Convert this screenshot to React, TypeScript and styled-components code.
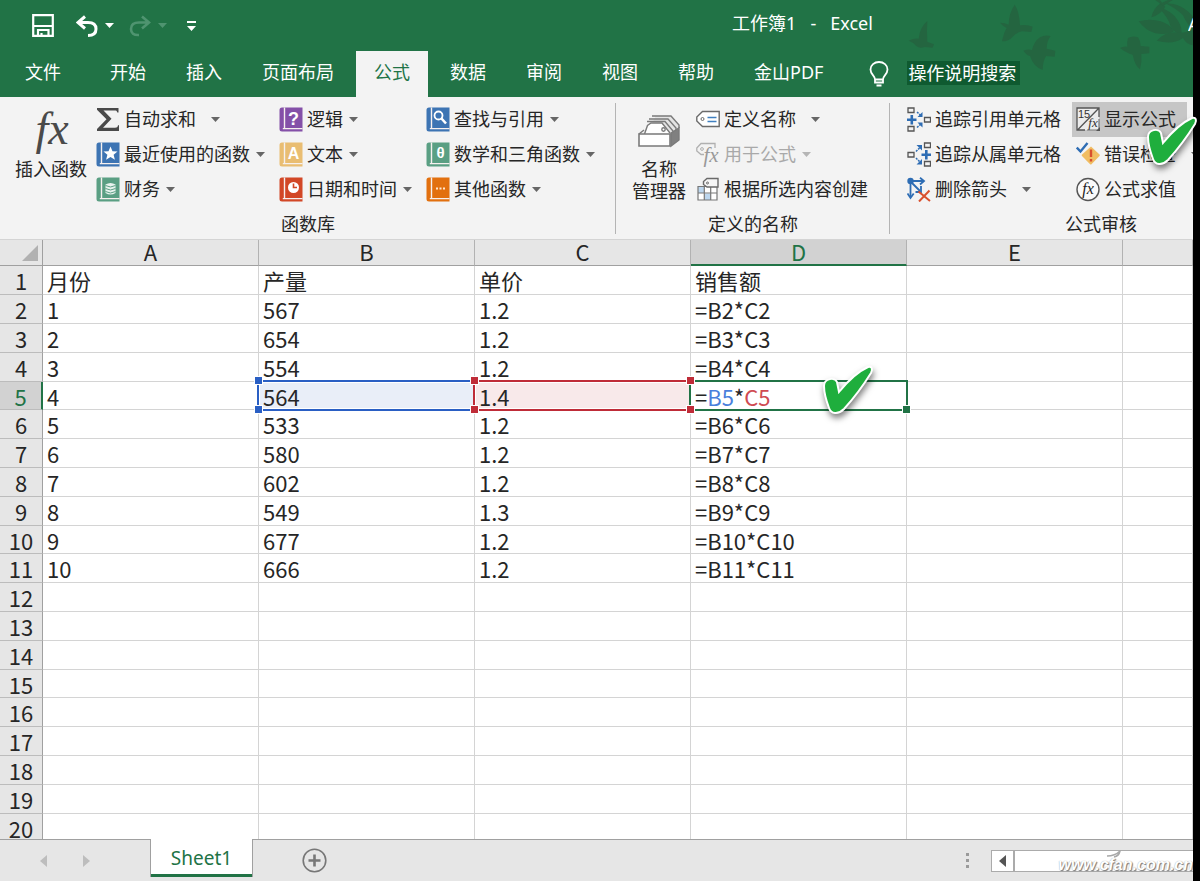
import React from "react";
import styled, { createGlobalStyle, css } from "styled-components";

const c = {
  green: "#217346",
  leaf: "#246540",
  ribbon: "#f3f3f3",
  head: "#e6e6e6",
  headSel: "#d2d2d2",
  line: "#d4d4d4",
  edge: "#a0a0a0",
  ink: "#262626",
  blue: "#2a5fc4",
  red: "#bf2c38",
};

const Global = createGlobalStyle`
  *, *::before, *::after { box-sizing: border-box; }
  body { margin: 0; background: #000; }
  button { font: inherit; color: inherit; border: 0; background: none; padding: 0; cursor: pointer; }
`;

/* ---------- window ---------- */

const Screen = styled.div`
  position: relative;
  min-height: 100vh;
  padding-right: 7px;
  background: #000;
  display: flex;
  font-family: "Noto Sans", "Noto Sans CJK SC", sans-serif;
  font-size: 18px;
  line-height: 24px;
  color: ${c.ink};
`;

const Window = styled.div`
  flex: 1;
  min-width: 0;
  display: flex;
  flex-direction: column;
  overflow: hidden;
  background: #fff;
`;

const Top = styled.header`
  position: relative;
  background: ${c.green};
  color: #fff;
`;

const Birds = styled.svg`
  position: absolute;
  top: 0;
  right: 0;
  fill: ${c.leaf};
`;

const TitleBar = styled.div`
  position: relative;
  display: flex;
  align-items: center;
  height: 51px;
`;

const QuickAccess = styled.div`
  display: flex;
  align-items: center;
  width: 417px;
  padding-left: 32px;
`;

const QuickButton = styled.button<{ $after?: number; $dim?: boolean }>`
  display: flex;
  align-items: center;
  gap: 7px;
  margin-right: ${(p) => p.$after ?? 0}px;
  color: ${(p) => (p.$dim ? "#4f9470" : "#fff")};
`;

const Title = styled.h1`
  flex: 1;
  margin: 0;
  padding-bottom: 5px;
  text-align: center;
  font-size: 18px;
  font-weight: 400;
  line-height: 24px;
  white-space: pre;
`;

const Account = styled.span`
  width: 5px;
  padding-bottom: 4px;
  overflow: hidden;
  white-space: nowrap;
`;

const Tabs = styled.nav`
  position: relative;
  display: flex;
  gap: 4px;
  height: 46px;
  padding-left: 7px;
`;

const Tab = styled.button<{ $active?: boolean; $file?: boolean }>`
  padding: 0 18px 4px;
  white-space: nowrap;
  margin-right: ${(p) => (p.$file ? 9 : 0)}px;
  ${(p) =>
    p.$active &&
    css`
      background: ${c.ribbon};
      color: ${c.green};
    `}
`;

const Tell = styled.button`
  display: flex;
  align-items: center;
  gap: 18px;
  margin-left: 24px;
  padding-bottom: 3px;
  white-space: nowrap;
  svg {
    margin-top: 3px;
  }
  span {
    background: #0f5a30;
    padding: 0 4px 0 1px;
  }
`;

/* ---------- ribbon ---------- */

const Ribbon = styled.div`
  display: flex;
  height: 143px;
  padding-top: 5px;
  overflow: hidden;
  background: ${c.ribbon};
  border-bottom: 1px solid ${c.line};
`;

const Group = styled.section<{ $width: number }>`
  flex: none;
  width: ${(p) => p.$width}px;
  display: flex;
  flex-direction: column;
  position: relative;
  &:not(:last-child)::after {
    content: "";
    position: absolute;
    right: 0;
    top: 1px;
    bottom: 5px;
    width: 1px;
    background: #b4b4b4;
  }
`;

const GroupBody = styled.div<{ $left: number }>`
  display: flex;
  height: 105px;
  padding-left: ${(p) => p.$left}px;
`;

const GroupName = styled.h2`
  margin: 0;
  text-align: center;
  font-size: 18px;
  font-weight: 400;
  line-height: 34px;
`;

const BigButton = styled.button<{ $width: number }>`
  width: ${(p) => p.$width}px;
  display: flex;
  flex-direction: column;
  align-items: center;
  line-height: 22px;
  svg {
    height: 50px;
    margin: 6px 0 0;
    flex: none;
  }
`;

const Commands = styled.div<{ $width: number }>`
  flex: none;
  width: ${(p) => p.$width}px;
  display: flex;
  flex-direction: column;
  align-items: flex-start;
`;

const Padded = styled.div<{ $on?: boolean }>`
  padding-left: ${(p) => (p.$on ? 8 : 0)}px;
`;

const Command = styled.button<{ $wide?: boolean; $pressed?: boolean; $inset?: boolean }>`
  display: flex;
  align-items: center;
  height: 35px;
  gap: 4px;
  white-space: nowrap;
  padding: ${(p) => (p.$inset ? "0 11px 0 4px" : "0")};
  background: ${(p) => (p.$pressed ? "#c6c6c6" : "transparent")};
  &:disabled {
    color: #a9a9a9;
  }
  svg {
    flex: none;
  }
  span {
    padding-bottom: 2px;
  }
  svg + span + svg {
    margin-left: ${(p) => (p.$wide ? 11 : 2)}px;
  }
`;

/* ---------- sheet ---------- */

const Sheet = styled.main`
  flex: 1 1 0;
  min-height: 599px;
  overflow: hidden;
`;

const Grid = styled.table`
  width: 100%;
  table-layout: fixed;
  border-collapse: separate;
  border-spacing: 0;
  font-family: "Noto Sans CJK SC", sans-serif;
  font-size: 22px;
  line-height: 26px;
  th,
  td {
    padding: 0;
    font-weight: 400;
    white-space: nowrap;
  }
  tbody tr {
    height: 29px;
  }
  tbody tr:nth-child(5n) {
    height: 28px;
  }
`;

const Corner = styled.td`
  height: 26px;
  background: ${c.head};
  border-right: 1px solid ${c.edge};
  border-bottom: 1px solid ${c.edge};
  svg {
    display: block;
    margin-left: 22px;
  }
`;

const ColHead = styled.th<{ $sel?: boolean }>`
  height: 26px;
  line-height: 22px;
  vertical-align: top;
  background: ${(p) => (p.$sel ? c.headSel : c.head)};
  color: ${(p) => (p.$sel ? c.green : c.ink)};
  border-right: 1px solid #b2b2b2;
  border-bottom: ${(p) => (p.$sel ? `2px solid ${c.green}` : `1px solid ${c.edge}`)};
`;

const RowHead = styled.th<{ $sel?: boolean }>`
  background: ${(p) => (p.$sel ? c.headSel : c.head)};
  color: ${(p) => (p.$sel ? c.green : c.ink)};
  border-right: ${(p) => (p.$sel ? `2px solid ${c.green}` : `1px solid ${c.edge}`)};
  border-bottom: 1px solid #bcbcbc;
`;

const Cell = styled.td<{ $fill?: string }>`
  position: relative;
  background: ${(p) => p.$fill ?? "#fff"};
  border-right: 1px solid ${c.line};
  border-bottom: 1px solid ${c.line};
  && {
    padding-left: 4px;
  }
`;

const Outline = styled.span<{ $color: string }>`
  position: absolute;
  z-index: 1;
  inset: -2px;
  border: 2px solid ${(p) => p.$color};
  box-shadow: inset 0 0 0 1px #fff;
  pointer-events: none;
`;

const Handle = styled.i<{ $color: string; $at: "tl" | "tr" | "bl" | "br" }>`
  position: absolute;
  z-index: 2;
  width: 7px;
  height: 7px;
  background: ${(p) => p.$color};
  box-shadow: 0 0 0 1px #fff;
  ${(p) => (p.$at[0] === "t" ? "top: -5px;" : "bottom: -4px;")}
  ${(p) => (p.$at[1] === "l" ? "left: -4px;" : "right: -4px;")}
`;

const Ref = styled.span<{ $color: string }>`
  color: ${(p) => p.$color};
`;

const Check = styled.svg`
  position: absolute;
  z-index: 3;
  overflow: visible;
  filter: drop-shadow(1px 4px 3px rgba(0, 0, 0, 0.5));
`;

const CellCheck = styled(Check)`
  left: 132px;
  top: -16px;
`;

const RibbonCheck = styled(Check)`
  right: 3px;
  top: 117px;
`;

/* ---------- bottom bar ---------- */

const Bottom = styled.footer`
  display: flex;
  height: 42px;
  background: ${c.head};
`;

const Ledge = styled.div<{ $grow?: boolean }>`
  display: flex;
  align-items: center;
  border-top: 1px solid ${c.edge};
  ${(p) => (p.$grow ? "flex: 1; min-width: 0;" : "width: 150px; gap: 36px; padding-left: 40px;")}
`;

const Step = styled.button`
  display: flex;
`;

const SheetTab = styled.button`
  width: 103px;
  height: 38px;
  background: #fff;
  color: ${c.green};
  border: solid ${c.edge};
  border-width: 0 1px;
  box-shadow: inset 0 -3px ${c.green};
  font-size: 19px;
`;

const AddSheet = styled.button`
  margin: 0 auto 0 49px;
  display: flex;
`;

const Dots = styled.svg`
  margin-right: 22px;
`;

const Scroller = styled.div`
  position: relative;
  display: flex;
  width: 202px;
  height: 22px;
  background: #fff;
  border: 1px solid #ababab;
  border-right: 0;
`;

const ScrollButton = styled.button`
  width: 23px;
  display: flex;
  align-items: center;
  justify-content: center;
  border-right: 2px solid #ababab;
`;

const Watermark = styled.span`
  position: absolute;
  right: 0;
  top: 3px;
  font: italic bold 16px/22px "Liberation Sans", sans-serif;
  color: #fff;
  text-shadow: 1px 1px 1px #777, 0 0 1px #999;
  white-space: nowrap;
  svg {
    position: absolute;
    left: 48px;
    top: -4px;
  }
`;

/* ---------- icons ---------- */

const Arrow = ({ fill = "#666" }: { fill?: string }) => (
  <svg width="9" height="5" viewBox="0 0 9 5" fill={fill}>
    <path d="M0 0h9L4.500 5z" />
  </svg>
);

const Book = ({ color, children }: { color: string; children: React.ReactNode }) => (
  <svg width="24" height="25" viewBox="0 0 24 25">
    <path d="M3 0.5h20.500v24H3a2.500 2.500 0 0 1-2.500-2.500V3A2.500 2.500 0 0 1 3 .5z" fill={color} />
    <path d="M5.500 .5v20.500M23.500 21.600H3.800" stroke="#f6f0ee" strokeWidth="1.400" fill="none" />
    {children}
  </svg>
);

const glyph = {
  fill: "#fff",
  fontFamily: "Liberation Sans, sans-serif",
  fontWeight: 700,
  textAnchor: "middle" as const,
};
const fxText = {
  fontFamily: "Liberation Serif, serif",
  fontStyle: "italic",
  textAnchor: "middle" as const,
};

const Sigma = () => (
  <svg width="24" height="25" viewBox="0 0 24 25">
    <path d="M1 1h21.500v4.500h-1.200c-.4-1.700-1-2-3-2H7.500l8 8.200-8.500 9H19c2 0 2.600-.6 3-2.400h1V24H1v-2l9.500-9.700L1 2.800z" fill="#4a4a4a" />
  </svg>
);

const Precedents = () => (
  <svg width="24" height="25" viewBox="0 0 24 25" fill="none">
    <path d="M1 1h6v4.500H1zM1 19.500h6V24H1zM17.500 10.500h6v4.500h-6z" stroke="#555" strokeWidth="1.300" />
    <path d="M0 12.700h9.500M4.800 8v9.500" stroke="#2e6db4" strokeWidth="2.600" />
    <path d="M10 5l4 3.500M10 20.500l4-3.500" stroke="#2e6db4" strokeWidth="1.500" strokeDasharray="2 1" />
    <path d="M15.500 5v5h-5zM15.500 20.500v-5h-5z" fill="#2e6db4" />
  </svg>
);

const Dependents = () => (
  <svg width="24" height="25" viewBox="0 0 24 25" fill="none">
    <path d="M1 10.500h6V15H1zM17.500 1h6v4.500h-6zM17.500 19.500h6V24h-6z" stroke="#555" strokeWidth="1.300" />
    <path d="M14.500 12.700H24M19.300 8v9.500" stroke="#2e6db4" strokeWidth="2.600" />
    <path d="M9 9.500l4-4M9 16l4 4" stroke="#2e6db4" strokeWidth="1.500" strokeDasharray="2 1" />
    <path d="M15 3v5.500L9.500 3zM15 22.500V17l-5.500 5.500z" fill="#2e6db4" />
  </svg>
);

const RemoveArrows = () => (
  <svg width="24" height="25" viewBox="0 0 24 25" fill="none">
    <circle cx="3.500" cy="4" r="3.200" fill="#2e6db4" />
    <path d="M3.500 4H16M3.500 4v16M4 5l9 9" stroke="#2e6db4" strokeWidth="1.800" />
    <path d="M13 .8L17 4l-4 3.500M.5 16.500L3.500 21l3.200-4.500M14 9v6H8.500" stroke="#2e6db4" strokeWidth="1.800" />
    <path d="M11.500 14.500L23 24M22.500 13.500L12 24.500" stroke="#d9502e" strokeWidth="2" />
  </svg>
);

const ShowFormulas = () => (
  <svg width="24" height="25" viewBox="0 0 24 25" fill="none">
    <path d="M1 1h22v22H1z" fill="#ececec" />
    <path d="M23 10V1H1v22h8M23 1L1.500 23" stroke="#555" strokeWidth="1.300" />
    <path d="M23 12v11H11" stroke="#777" strokeWidth="1.200" />
    <text x="8" y="11" fontSize="11" fill="#333" textAnchor="middle" fontFamily="Liberation Sans">15</text>
    <text x="17" y="20" fontSize="13" fill="#333" {...fxText}>fx</text>
    <path d="M24 24h-4l4-4z" fill="#555" />
  </svg>
);

const ErrorCheck = () => (
  <svg width="24" height="25" viewBox="0 0 24 25" fill="none">
    <path d="M15 4.500l8.500 8a1 1 0 0 1 0 1.400l-8 8.300a1 1 0 0 1-1.400 0L6 14a1 1 0 0 1 0-1.400z" fill="#f0bd62" />
    <path d="M15 7.500v7.500M15 17v2.500" stroke="#d9502e" strokeWidth="2.400" />
    <path d="M.8 5.500L4.500 9.500 11.500 1" stroke="#2e6db4" strokeWidth="2.400" />
  </svg>
);

const Evaluate = () => (
  <svg width="24" height="25" viewBox="0 0 24 25" fill="none">
    <circle cx="12" cy="12.500" r="11" stroke="#555" strokeWidth="1.400" fill="#fafafa" />
    <text x="12" y="17" fontSize="16" fill="#222" {...fxText}>fx</text>
  </svg>
);

const DefineName = () => (
  <svg width="24" height="25" viewBox="0 0 24 25" fill="none">
    <path d="M6.500 4.500h16.700v15H6.500L.8 14V10z" fill="#fff" stroke="#6a6a6a" strokeWidth="1.400" />
    <circle cx="6.500" cy="12" r="1.500" stroke="#6a6a6a" />
    <path d="M11.500 10.500h9M11.500 14.500h9" stroke="#3f7fc0" strokeWidth="1.500" />
  </svg>
);

const UseInFormula = () => (
  <svg width="24" height="25" viewBox="0 0 24 25" fill="none">
    <path d="M8 12.500H5L.8 9V6L5 1.500h14V6" stroke="#b0b0b0" strokeWidth="1.300" />
    <circle cx="6" cy="7" r="1.400" stroke="#b0b0b0" />
    <text x="15" y="20" fontSize="21" fill="#999" {...fxText}>fx</text>
  </svg>
);

const FromSelection = () => (
  <svg width="24" height="25" viewBox="0 0 24 25" fill="none">
    <path d="M2 9.500h19V23H2z" fill="#fff" />
    <path d="M2 9.500h6V16H2zM8.500 16.500h6V23h-6z" fill="#bcd6ee" />
    <path d="M2 9.500h19V23H2zM2 16h19M8.300 9.500V23M14.700 9.500V23" stroke="#777" strokeWidth="1.200" />
    <path d="M11 1.500h11v8.500H11L7.500 7.500V4.500z" fill="#f6f6f6" stroke="#6a6a6a" strokeWidth="1.400" />
    <circle cx="11.500" cy="6" r="1" stroke="#6a6a6a" />
  </svg>
);

const NameManager = () => (
  <svg width="42" height="50" viewBox="0 -7 42 50" fill="none" stroke="#7a7a7a" strokeWidth="1.400">
    <path d="M14 9l3.500-8h15.500l8 9v16l-9 6V18z" fill="#e4e4e4" stroke="none" />
    <path d="M14 1h19l8 9v3M11 4h19l8 9v3M9 6.500h18l8 9.500v3" />
    <path d="M6.500 19l3-8.500L13 8h11l8 10" fill="#fff" />
    <circle cx="25.500" cy="14.500" r="1.700" />
    <path d="M33 18l8-5v12l-8 6z" fill="#808080" />
    <path d="M1 19h31v12H1z" fill="#fff" strokeWidth="1.600" />
    <path d="M1 19l5-4" />
  </svg>
);

const CheckShape = () => (
  <path
    d="M1 20C1 12 12 11 14 16l2 10C24 16 34 6 45 1c4-1 5 2 3 6C40 20 30 33 21 43c-6 6-13 5-15-1C3 34 1 27 1 20z"
    fill="#1fae3d"
    stroke="#fff"
    strokeWidth="2"
  />
);

/* ---------- command ---------- */

type ItemProps = {
  icon: React.ReactNode;
  label: string;
  arrow?: boolean;
  wide?: boolean;
  pad?: boolean;
  inset?: boolean;
  pressed?: boolean;
  disabled?: boolean;
};

function CommandItem({ icon, label, arrow, wide, pad, inset, pressed, disabled }: ItemProps) {
  return (
    <Padded $on={pad}>
      <Command $wide={wide} $inset={inset} $pressed={pressed} disabled={disabled}>
        {icon}
        <span>{label}</span>
        {(arrow || wide) && <Arrow fill={disabled ? "#b5b5b5" : "#666"} />}
      </Command>
    </Padded>
  );
}

/* ---------- data ---------- */

const columns = ["A", "B", "C", "D", "E", ""];

const records: [string, string][] = [
  ["567", "1.2"],
  ["654", "1.2"],
  ["554", "1.2"],
  ["564", "1.4"],
  ["533", "1.2"],
  ["580", "1.2"],
  ["602", "1.2"],
  ["549", "1.3"],
  ["677", "1.2"],
  ["666", "1.2"],
];

const rowCells = (row: number): string[] => {
  if (row === 1) return ["月份", "产量", "单价", "销售额"];
  const r = records[row - 2];
  return r ? [String(row - 1), r[0], r[1], `=B${row}*C${row}`] : ["", "", "", ""];
};

const corners = ["tl", "tr", "bl", "br"] as const;

const ActiveRow = () => (
  <>
    <Cell>4</Cell>
    <Cell $fill="#e9eef8">
      564
      <Outline $color={c.blue} />
      <Handle $color={c.blue} $at="tl" />
      <Handle $color={c.blue} $at="bl" />
    </Cell>
    <Cell $fill="#f8e9ea">
      1.4
      <Outline $color={c.red} />
      {corners.map((k) => (
        <Handle key={k} $color={c.red} $at={k} />
      ))}
    </Cell>
    <Cell>
      =<Ref $color="#4a7fdc">B5</Ref>*<Ref $color="#cf4a52">C5</Ref>
      <Outline $color={c.green} />
      <Handle $color={c.green} $at="br" />
      <CellCheck width="50" height="48" viewBox="0 0 50 48">
        <CheckShape />
      </CellCheck>
    </Cell>
    <Cell />
    <Cell />
  </>
);

const tabs = ["开始", "插入", "页面布局", "公式", "数据", "审阅", "视图", "帮助", "金山PDF"];

export default function App() {
  return (
    <Screen>
      <Global />
      <Window>
        <Top>
          <Birds width="287" height="77" viewBox="320 0 861 231">
            <path d="M328 122q16-8 30-6 4-36 26-53-2 30 0 62l20 8-4 10-24-2q-16 6-26-4-8-10-22-15z" />
            <path d="M602 68q16 0 26 6 0-34 18-60 14 20 16 62 20-4 38 4l-4 16-28-2q-18 4-28 16-12 14-32 14 6-28 14-40-12-6-20-16z" />
            <path d="M672 152q14-6 26-2 6-26 24-38 14-8 32-4-12 16-12 38l26 6-2 18-26-2q-10 18-10 42-28-10-38-42-10-2-20-16z" />
            <path d="M962 144q10-6 22-4-2-14 2-26 14-8 30-2 8 10 8 26l26 2 0 20-24 2q2 24-4 46-16-12-22-44-18-4-38-20z" />
            <path d="M1018 64q34-10 66 0 28 8 40 30-20 12-56 6-30-8-50-36z" />
            <path d="M1076 22q40 8 60 40 14 22 10 44-20-8-32-26-8-30-38-58z" />
            <path d="M1056 52q6-28 28-42l14 10q-14 24-42 32z" />
            <path d="M1098 10q50 0 83 40v40q-20-20-30-44-20-20-53-36z" />
            <path d="M1072 122q30-30 64-24 24 2 45-12v50q-20-2-30-22-30 22-79 8z" />
            <path d="M1068 0h14l6 8 18-8h14l-28 18z" />
          </Birds>
          <TitleBar>
            <QuickAccess>
              <QuickButton aria-label="保存" $after={22}>
                <svg width="22" height="23" viewBox="0 0 22 23" fill="none" stroke="currentColor" strokeWidth="2.200">
                  <path d="M1.200 1.200h19.600v20.600H1.200zM1 12h20M6 21.500v-5.500h10.500v5.500M9.500 22v-3" />
                </svg>
              </QuickButton>
              <QuickButton aria-label="撤消" $after={15}>
                <svg width="22" height="22" viewBox="0 0 22 22" fill="none" stroke="currentColor" strokeWidth="3">
                  <path d="M9 1.500L2 7.500l7 6M2.500 7.500H12q8 0 8 6.500t-8 6.500" />
                </svg>
                <Arrow fill="#fff" />
              </QuickButton>
              <QuickButton aria-label="恢复" $dim $after={20}>
                <svg width="22" height="22" viewBox="0 0 22 22" fill="none" stroke="currentColor" strokeWidth="2.600">
                  <path d="M13 1.500l7 6-7 6M19.500 7.500H10q-8 0-8 6.500t8 6" />
                </svg>
                <Arrow fill="#4f9470" />
              </QuickButton>
              <QuickButton aria-label="自定义快速访问工具栏">
                <svg width="9" height="10" viewBox="0 0 9 10" fill="#fff">
                  <path d="M0 0h9v2H0zM0 5h9l-4.500 5z" />
                </svg>
              </QuickButton>
            </QuickAccess>
            <Title>{"工作簿1   -   Excel"}</Title>
            <Account>A</Account>
          </TitleBar>
          <Tabs>
            <Tab $file>文件</Tab>
            {tabs.map((t) => (
              <Tab key={t} $active={t === "公式"}>
                {t}
              </Tab>
            ))}
            <Tell>
              <svg width="20" height="26" viewBox="0 0 20 26" fill="none" stroke="#fff" strokeWidth="1.800">
                <path d="M6 18.500c0-4-4.500-5-4.500-10a8.500 7.500 0 0 1 17 0c0 5-4.500 6-4.500 10zM6 18v3.500h8V18M7.500 24.500h5" />
              </svg>
              <span>操作说明搜索</span>
            </Tell>
          </Tabs>
        </Top>

        <Ribbon>
          <Group $width={616}>
            <GroupBody $left={14}>
              <BigButton $width={74}>
                <svg width="44" height="50" viewBox="0 0 44 50">
                  <text x="23" y="36" fontSize="46" fill="#4a4a4a" {...fxText}>fx</text>
                </svg>
                <span>插入函数</span>
              </BigButton>
              <Commands $width={191}>
                <CommandItem icon={<Sigma />} label="自动求和" wide pad />
                <CommandItem
                  icon={
                    <Book color="#3d74b3">
                      <path d="M14.500 4.500l2 4.800 5 .3-3.900 3.200 1.300 5-4.400-2.800-4.400 2.800 1.300-5-3.900-3.200 5-.3z" fill="#fff" />
                    </Book>
                  }
                  label="最近使用的函数"
                  arrow
                  pad
                />
                <CommandItem
                  icon={
                    <Book color="#5a9f83">
                      <path d="M9.500 7.500q5-3 10 0v8.500q-5 3-10 0z" fill="#e8f3ee" />
                      <path d="M9.500 8.500q5 3 10 0M9.500 11.500q5 3 10 0M9.500 14.500q5 3 10 0" stroke="#5a9f83" fill="none" />
                    </Book>
                  }
                  label="财务"
                  arrow
                  pad
                />
              </Commands>
              <Commands $width={147}>
                <CommandItem
                  icon={<Book color="#8450a8"><text x="14.500" y="18" fontSize="18" {...glyph}>?</text></Book>}
                  label="逻辑"
                  arrow
                />
                <CommandItem
                  icon={<Book color="#e9bd72"><text x="14.500" y="17" fontSize="16" {...glyph}>A</text></Book>}
                  label="文本"
                  arrow
                />
                <CommandItem
                  icon={
                    <Book color="#d24726">
                      <circle cx="14.500" cy="10.500" r="5.500" fill="#fff" />
                      <path d="M14.500 6.500v4h3.500" stroke="#d24726" strokeWidth="1.600" fill="none" />
                    </Book>
                  }
                  label="日期和时间"
                  arrow
                />
              </Commands>
              <Commands $width={180}>
                <CommandItem
                  icon={
                    <Book color="#3d74b3">
                      <circle cx="12.500" cy="8.500" r="4" stroke="#fff" strokeWidth="1.800" fill="none" />
                      <path d="M15.500 11.500l4.500 5" stroke="#fff" strokeWidth="2.600" />
                    </Book>
                  }
                  label="查找与引用"
                  arrow
                />
                <CommandItem
                  icon={<Book color="#5a9f83"><text x="14.500" y="16" fontSize="15" {...glyph}>θ</text></Book>}
                  label="数学和三角函数"
                  arrow
                />
                <CommandItem
                  icon={
                    <Book color="#e2700f">
                      <path d="M10 10.500h2v2h-2zM13.500 10.500h2v2h-2zM17 10.500h2v2h-2z" fill="#ffe6cf" />
                    </Book>
                  }
                  label="其他函数"
                  arrow
                />
              </Commands>
            </GroupBody>
            <GroupName>函数库</GroupName>
          </Group>

          <Group $width={274}>
            <GroupBody $left={14}>
              <BigButton $width={58}>
                <NameManager />
                <span>
                  名称
                  <br />
                  管理器
                </span>
              </BigButton>
              <Commands $width={180}>
                <CommandItem icon={<DefineName />} label="定义名称" wide pad />
                <CommandItem icon={<UseInFormula />} label="用于公式" arrow disabled pad />
                <CommandItem icon={<FromSelection />} label="根据所选内容创建" pad />
              </Commands>
            </GroupBody>
            <GroupName>定义的名称</GroupName>
          </Group>

          <Group $width={422}>
            <GroupBody $left={17}>
              <Commands $width={165}>
                <CommandItem icon={<Precedents />} label="追踪引用单元格" />
                <CommandItem icon={<Dependents />} label="追踪从属单元格" />
                <CommandItem icon={<RemoveArrows />} label="删除箭头" wide />
              </Commands>
              <Commands $width={150}>
                <CommandItem icon={<ShowFormulas />} label="显示公式" inset pressed />
                <CommandItem icon={<ErrorCheck />} label="错误检查" inset wide />
                <CommandItem icon={<Evaluate />} label="公式求值" inset />
              </Commands>
            </GroupBody>
            <GroupName>公式审核</GroupName>
          </Group>
        </Ribbon>

        <Sheet>
          <Grid>
            <colgroup>
              <col width="43" />
              <col width="216" />
              <col width="216" />
              <col width="216" />
              <col width="216" />
              <col width="216" />
              <col />
            </colgroup>
            <thead>
              <tr>
                <Corner>
                  <svg width="16" height="16" viewBox="0 0 16 16">
                    <path d="M16 0v16H0z" fill="#b1b1b1" />
                  </svg>
                </Corner>
                {columns.map((n) => (
                  <ColHead key={n} scope="col" $sel={n === "D"}>
                    {n}
                  </ColHead>
                ))}
              </tr>
            </thead>
            <tbody>
              {Array.from({ length: 20 }, (_, i) => i + 1).map((row) => (
                <tr key={row}>
                  <RowHead scope="row" $sel={row === 5}>
                    {row}
                  </RowHead>
                  {row === 5 ? (
                    <ActiveRow />
                  ) : (
                    <>
                      {rowCells(row).map((text, i) => (
                        <Cell key={i}>{text}</Cell>
                      ))}
                      <Cell />
                      <Cell />
                    </>
                  )}
                </tr>
              ))}
            </tbody>
          </Grid>
        </Sheet>

        <Bottom>
          <Ledge>
            <Step aria-label="上一个工作表">
              <svg width="7" height="12" viewBox="0 0 7 12" fill="#bdbdbd"><path d="M7 0v12L0 6z" /></svg>
            </Step>
            <Step aria-label="下一个工作表">
              <svg width="7" height="12" viewBox="0 0 7 12" fill="#bdbdbd"><path d="M0 0v12l7-6z" /></svg>
            </Step>
          </Ledge>
          <SheetTab>Sheet1</SheetTab>
          <Ledge $grow>
            <AddSheet aria-label="新工作表">
              <svg width="25" height="25" viewBox="0 0 25 25" fill="none" stroke="#777">
                <circle cx="12.500" cy="12.500" r="11.300" strokeWidth="1.600" />
                <path d="M12.500 6.500v12M6.500 12.500h12" strokeWidth="2.600" />
              </svg>
            </AddSheet>
            <Dots width="3" height="16" viewBox="0 0 3 16" fill="#9a9a9a">
              <path d="M0 0h3v3H0zM0 6h3v3H0zM0 12h3v3H0z" />
            </Dots>
            <Scroller>
              <ScrollButton aria-label="向左滚动">
                <svg width="7" height="12" viewBox="0 0 7 12" fill="#555"><path d="M7 0v12L0 6z" /></svg>
              </ScrollButton>
              <Watermark>
                www.cfan.com.cn
                <svg width="16" height="8" viewBox="0 0 16 8" fill="none">
                  <path d="M1 6q8 0 13-5-1 5-6 6" stroke="#a8a8a8" strokeWidth="1.500" />
                </svg>
              </Watermark>
            </Scroller>
          </Ledge>
        </Bottom>
      </Window>
      <RibbonCheck width="50" height="48" viewBox="0 0 50 48">
        <CheckShape />
      </RibbonCheck>
    </Screen>
  );
}
